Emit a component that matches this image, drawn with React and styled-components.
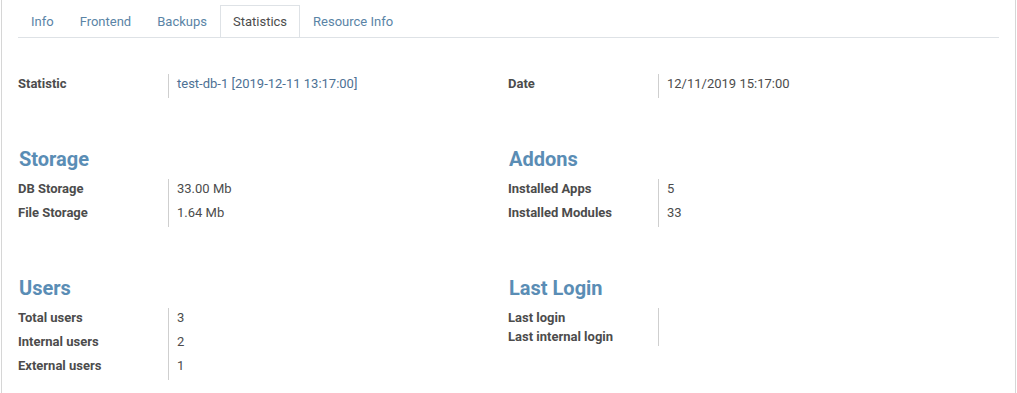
import styled, { createGlobalStyle } from "styled-components";

const GlobalStyle = createGlobalStyle`
  body {
    margin: 0;
    background: #fff;
    font-family: Roboto, "Liberation Sans", sans-serif;
    font-size: 13px;
    color: #4c4c4c;
  }
`;

const Sheet = styled.div`
  margin-left: 1px;
  width: 1015px;
  min-height: 393px;
  box-sizing: border-box;
  border-left: 1px solid #d6d6d6;
  border-right: 1px solid #d6d6d6;
  padding: 5px 16px 0;
`;

const TabBar = styled.ul`
  display: flex;
  list-style: none;
  margin: 0;
  padding: 0;
  border-bottom: 1px solid #dee2e6;
`;

const Tab = styled.li`
  padding: 6px 12px;
  line-height: 19px;
  border: 1px solid ${(p) => (p.$active ? "#dee2e6" : "transparent")};
  border-bottom: 0;
  color: ${(p) => (p.$active ? "#4c4c4c" : "#5a84a6")};
  cursor: pointer;
`;

const Content = styled.div`
  padding-top: 36px;
  display: flex;
  flex-direction: column;
  gap: 49px;
`;

const Pair = styled.div`
  display: grid;
  grid-template-columns: 490px 1fr;
`;

const Group = styled.div`
  display: flex;
  flex-direction: column;
`;

const Heading = styled.div`
  font-size: 20px;
  line-height: 24px;
  font-weight: 700;
  color: #5a8db5;
  margin-bottom: 8px;
  padding-left: 1px;
`;

const Table = styled.div`
  display: grid;
  grid-template-columns: 151px 1fr;
`;

const Label = styled.div`
  font-weight: 700;
  line-height: 19px;
  border-right: 1px solid #cfcfcf;
  padding-bottom: ${(p) => (p.$empty ? "0" : "5px")};
  white-space: nowrap;
`;

const Value = styled.div`
  line-height: 19px;
  padding-left: 8px;
  padding-bottom: ${(p) => (p.$empty ? "0" : "5px")};
`;

const Link = styled.a`
  color: #4d7194;
  text-decoration: none;
`;

const tabs = ["Info", "Frontend", "Backups", "Statistics", "Resource Info"];

const sections = [
  [
    {
      title: "Storage",
      rows: [
        ["DB Storage", "33.00 Mb"],
        ["File Storage", "1.64 Mb"],
      ],
    },
    {
      title: "Addons",
      rows: [
        ["Installed Apps", "5"],
        ["Installed Modules", "33"],
      ],
    },
  ],
  [
    {
      title: "Users",
      rows: [
        ["Total users", "3"],
        ["Internal users", "2"],
        ["External users", "1"],
      ],
    },
    {
      title: "Last Login",
      rows: [
        ["Last login", ""],
        ["Last internal login", ""],
      ],
    },
  ],
];

function Rows({ rows }) {
  return (
    <Table>
      {rows.map(([label, value]) => [
        <Label key={label + "-l"} $empty={!value}>
          {label}
        </Label>,
        <Value key={label + "-v"} $empty={!value}>
          {value}
        </Value>,
      ])}
    </Table>
  );
}

export default function App() {
  return (
    <>
      <GlobalStyle />
      <Sheet>
        <TabBar>
          {tabs.map((t) => (
            <Tab key={t} $active={t === "Statistics"}>
              {t}
            </Tab>
          ))}
        </TabBar>
        <Content>
          <Pair>
            <Table>
              <Label>Statistic</Label>
              <Value>
                <Link href="#">test-db-1 [2019-12-11 13:17:00]</Link>
              </Value>
            </Table>
            <Table>
              <Label>Date</Label>
              <Value>12/11/2019 15:17:00</Value>
            </Table>
          </Pair>
          {sections.map((pair, i) => (
            <Pair key={i}>
              {pair.map((g) => (
                <Group key={g.title}>
                  <Heading>{g.title}</Heading>
                  <Rows rows={g.rows} />
                </Group>
              ))}
            </Pair>
          ))}
        </Content>
      </Sheet>
    </>
  );
}
